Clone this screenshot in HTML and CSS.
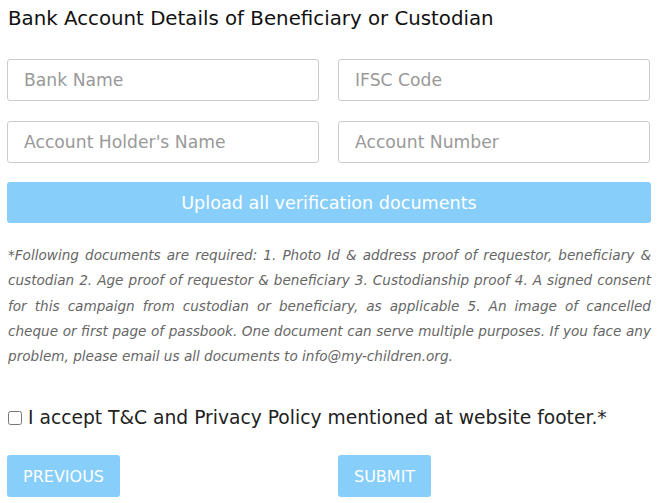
FILE: index.html
```html
<!DOCTYPE html>
<html>
<head>
<meta charset="utf-8">
<link rel="stylesheet" href="styles.css">
</head>
<body>
<form class="form">
  <h2 class="title">Bank Account Details of Beneficiary or Custodian</h2>
  <div class="grid">
    <input class="field" type="text" placeholder="Bank Name">
    <input class="field" type="text" placeholder="IFSC Code">
    <input class="field" type="text" placeholder="Account Holder's Name">
    <input class="field" type="text" placeholder="Account Number">
  </div>
  <button type="button" class="upload">Upload all verification documents</button>
  <p class="note">*Following documents are required: 1. Photo Id &amp; address proof of requestor, beneficiary &amp; custodian 2. Age proof of requestor &amp; beneficiary 3. Custodianship proof 4. A signed consent for this campaign from custodian or beneficiary, as applicable 5. An image of cancelled cheque or first page of passbook. One document can serve multiple purposes. If you face any problem, please email us all documents to info@my-children.org.</p>
  <label class="accept"><input type="checkbox" class="check"> I accept T&amp;C and Privacy Policy mentioned at website footer.*</label>
  <div class="actions">
    <div><button type="button" class="btn">PREVIOUS</button></div>
    <div><button type="button" class="btn">SUBMIT</button></div>
  </div>
</form>
</body>
</html>
```

FILE: styles.css
```css
html, body { margin: 0; padding: 0; background: #fff; }
body { font-family: "DejaVu Sans", "Open Sans", sans-serif; color: #222; }
.form { padding: 0 17px 0 7px; }
.title {
  margin: 0;
  padding: 8px 0 0 1px;
  font-size: 19.8px;
  font-weight: normal;
  line-height: 22px;
  color: #111;
}
.grid {
  display: grid;
  grid-template-columns: 312px 312px;
  column-gap: 19px;
  row-gap: 20px;
  margin-top: 29px;
}
.field {
  box-sizing: border-box;
  height: 42px;
  margin: 0;
  padding: 0 16px;
  border: 1px solid #ccc;
  border-radius: 3px;
  font-family: inherit;
  font-size: 17.2px;
  color: #333;
}
.field::placeholder { color: #999; }
.upload {
  display: block;
  box-sizing: border-box;
  width: 644px;
  height: 41px;
  margin-top: 19px;
  border: none;
  border-radius: 3px;
  background: #87cefa;
  color: #fff;
  font-family: inherit;
  font-size: 17.6px;
}
.note {
  margin: 20px 0 0 1px;
  font-size: 13.6px;
  font-style: italic;
  line-height: 25.3px;
  color: #666;
  text-align: justify;
}
.accept {
  display: flex;
  align-items: center;
  margin-top: 38px;
  font-size: 18.7px;
  color: #222;
}
.check { margin: 0 6px 0 1px; width: 14px; height: 14px; }
.actions {
  display: grid;
  grid-template-columns: 312px 312px;
  column-gap: 19px;
  margin-top: 27px;
}
.btn {
  height: 42px;
  padding: 0 16px;
  border: none;
  border-radius: 3px;
  background: #87cefa;
  color: #fff;
  font-family: inherit;
  font-size: 16px;
}
```
